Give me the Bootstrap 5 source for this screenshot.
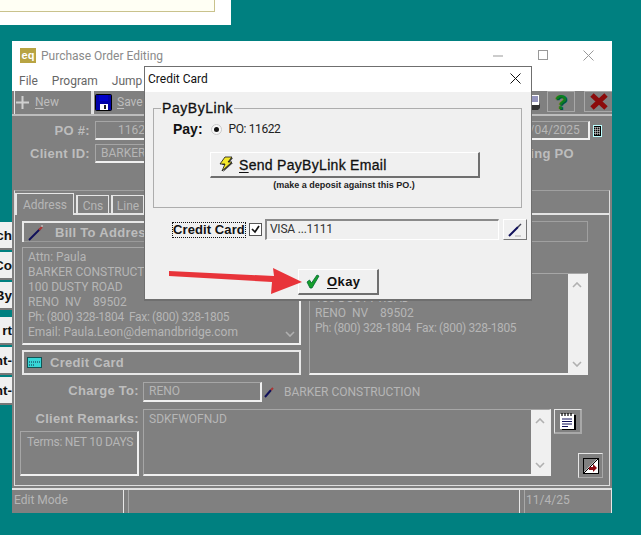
<!DOCTYPE html>
<html lang="en">
<head>
  <meta charset="UTF-8" />
  <meta name="viewport" content="width=device-width, initial-scale=1.0" />
  <title>Purchase Order Editing</title>
  <link href="https://cdn.jsdelivr.net/npm/bootstrap@5.3.3/dist/css/bootstrap.min.css" rel="stylesheet">
  <style>
    html, body { height: 100%; }
    body { margin: 0; background: #008080; overflow: hidden; position: relative; font: 12px/15px Roboto, sans-serif; color: #b6b6b6; }
    svg { display: block; flex: none; }
    u { text-underline-offset: 2px; }

    /* desktop windows */
    .back-win { position: absolute; left: 0; top: 0; width: 231px; height: 25px; background: #fff; }
    .back-inner { width: 215px; height: 12px; background: #fffff4; border: solid #c9c28c; border-width: 0 1px 1px 0; }
    .side-stack { position: absolute; left: 0; top: 222px; width: 12px; font: bold 13.5px/28px "Liberation Sans", sans-serif; color: #111; }
    .side-btn { height: 28px; margin-bottom: 2px; background: #f0f0f0; border-bottom: 2px solid #777; display: flex; justify-content: flex-end; overflow: hidden; white-space: nowrap; }
    .side-gap { margin-bottom: 7px; }

    .main-win { position: absolute; left: 12px; top: 41px; width: 600px; height: 472px; background: #808080; display: flex; flex-direction: column; }
    .win-title { height: 25px; background: #fff; color: #8a8a8a; padding: 7px 0 0 8px; }
    .win-name { padding-top: 1px; }
    .eq-logo { width: 16px; height: 15px; background: #b8a443; color: #fff; font: bold 11px/14px "Liberation Sans", sans-serif; text-align: center; margin-right: 5px; }
    .win-ctrl { margin-left: auto; gap: 34px; padding: 2px 18px 0 0; }
    .win-menu { height: 25px; background: #fff; color: #666; gap: 14px; padding: 8px 0 0 7px; }
    .tool-bar { height: 25px; padding-left: 2px; border-bottom: 2px solid #bdbdbd; }
    .tool-btn { height: 23px; border-left: 1px solid #e6e6e6; border-right: 2px solid #e0e0e0; display: flex; align-items: center; color: #bdbdbd; }
    .tool-new { width: 79px; padding-left: 1px; gap: 6px; }
    .tool-save { width: 120px; border-right: 0; padding-left: 1px; gap: 5px; }
    .tool-print { margin-left: auto; margin-right: 6px; }
    .tool-help { width: 28px; height: 21px; margin-right: 9px; border: 1px solid #a8a8a8; color: #0b7f1e; font: bold 21px/19px "Liberation Sans", sans-serif; text-align: center; text-shadow: 1px 1px 0 #053; }
    .tool-close { width: 28px; height: 21px; border: 1px solid #a8a8a8; border-right: 0; display: flex; align-items: center; justify-content: center; }

    /* form header */
    .form-head { height: 74px; padding-top: 3px; }
    .head-row { height: 23px; display: flex; align-items: center; }
    .form-label-text { font: bold 13px/16px "Liberation Sans", sans-serif; color: #bdbdbd; letter-spacing: .3px; text-align: right; white-space: nowrap; }
    .label-po { width: 78px; margin-right: 5px; }
    .sunk-field { border-style: solid; border-color: #a6a6a6 #f0f0f0 #f0f0f0 #a6a6a6; border-width: 1px 2px 2px 1px; white-space: nowrap; overflow: hidden; padding: 1px 5px 0; }
    .po-field { width: 120px; height: 19px; padding-left: 22px; }
    .client-field { width: 120px; height: 19px; }
    .date-field { width: 80px; height: 19px; margin-left: auto; text-align: right; padding-right: 14px; }
    .date-pick { margin: 0 10px 0 3px; }
    .status-text { margin-left: auto; margin-right: 38px; }

    /* tabbed panel */
    .tab-panel { height: 296px; margin-left: 2px; margin-right: 2px; border: 1px solid #dedede; border-top-color: #a0a0a0; }
    .tab-strip { height: 24px; padding-top: 2px; gap: 2px; border-bottom: 2px solid #e4e4e4; }
    .tab-item { height: 20px; margin-top: 2px; line-height: 20px; text-align: center; border: solid #e6e6e6; border-width: 1px 1px 0 2px; }
    .tab-on { width: 59px; height: 22px; margin-top: 0; line-height: 22px; background: #808080; position: relative; z-index: 1; }
    .tab-cns { width: 33px; }
    .tab-line { width: 33px; }
    .panel-cols { display: grid; grid-template-columns: 279px 279px; column-gap: 8px; padding: 6px 0 0 7px; }
    .head-box { height: 21px; border: solid #e8e8e8; border-width: 2px 0 0 2px; box-shadow: inset -1px -1px 0 #9a9a9a; display: flex; align-items: center; padding-left: 4px; margin-bottom: 5px; }
    .head-bill { gap: 11px; }
    .right-stack { display: flex; flex-direction: column; }
    .right-head { height: 21px; border: 1px solid #a0a0a0; margin-bottom: 31px; }
    .addr-box { display: flex; border-style: solid; border-color: #a6a6a6 #f0f0f0 #f0f0f0 #a6a6a6; border-width: 1px 2px 2px 1px; white-space: nowrap; overflow: hidden; }
    .addr-left { height: 98px; }
    .addr-right { height: 102px; }
    .addr-text { flex: 1; padding: 2px 5px; overflow: hidden; }
    .phone-line { letter-spacing: -.35px; }
    .scroll-bar { width: 18px; background: #f0f0f0; display: flex; flex-direction: column; justify-content: space-between; align-items: center; padding: 8px 0 6px; }
    .scroll-dim { background: #808080; padding-top: 0; justify-content: flex-end; }
    .credit-box { height: 25px; margin-top: 5px; border: 2px solid #e8e8e8; display: flex; align-items: center; padding-left: 3px; gap: 8px; }
    .charge-row { display: flex; align-items: center; height: 20px; margin: 7px 0 0 7px; }
    .label-charge { width: 117px; margin-right: 4px; line-height: 14px; padding-bottom: 2px; }
    .charge-field { width: 119px; height: 20px; }
    .charge-pen { margin: 0 10px 0 2px; }
    .remark-grid { display: grid; grid-template-columns: 119px 408px 50px; column-gap: 4px; margin: 7px 0 0 5px; }
    .remark-left { display: flex; flex-direction: column; }
    .label-remark { height: 22px; line-height: 20px; }
    .terms-box { height: 45px; padding: 3px 6px; letter-spacing: -.25px; }
    .remark-box { height: 67px; }
    .remark-side { display: flex; flex-direction: column; align-items: flex-start; margin-left: -1px; }
    .note-btn { width: 28px; height: 25px; border: solid; border-color: #e6e6e6 #a8a8a8 #a8a8a8 #e6e6e6; border-width: 1px 2px 2px 1px; display: flex; align-items: center; justify-content: center; }
    .nav-btn { width: 25px; height: 25px; margin: 19px 0 0 24px; border: 1px solid; border-color: #e6e6e6 #a8a8a8 #a8a8a8 #e6e6e6; display: flex; align-items: center; justify-content: center; }

    .status-bar { height: 25px; margin-top: 2px; border-top: 2px solid #e0e0e0; display: flex; }
    .stat-one { width: 112px; padding: 3px 2px; border-right: 1px solid #e8e8e8; }
    .stat-two { width: 392px; margin-left: 4px; border-left: 1px solid #a8a8a8; border-right: 1px solid #e8e8e8; }
    .stat-three { flex: 1; margin-left: 4px; padding: 3px 1px; border-left: 1px solid #a8a8a8; border-right: 1px solid #e8e8e8; }

    /* dialog */
    .cc-dialog { position: absolute; left: 144px; top: 66px; width: 388px; height: 235px; background: #f0f0f0; border: solid #6f6f6f; border-width: 1px 1px 2px 1px; color: #111; display: flex; flex-direction: column; }
    .cc-title { height: 25px; background: #fff; padding: 5px 10px 0 3px; color: #111; }
    .cc-close { margin-left: auto; margin-top: 1px; }
    .cc-group { height: 100px; margin: 16px 9px 0 8px; border: 1px solid #adadad; position: relative; }
    .cc-legend { position: absolute; left: 7px; top: -9px; padding: 0 1px; background: #f0f0f0; font: 14px/16px "Liberation Sans", sans-serif; -webkit-text-stroke: .3px #111; letter-spacing: .55px; }
    .pay-row { height: 18px; margin: 11px 0 0 19px; display: flex; align-items: center; }
    .pay-label { font: bold 14px/16px "Liberation Sans", sans-serif; margin-right: 8px; }
    .radio-dot { width: 11px; height: 11px; border-radius: 50%; background: #f7f7f7; border: 1px solid #c9c9c9; margin-right: 7px; display: flex; align-items: center; justify-content: center; }
    .radio-dot::after { content: ""; width: 5px; height: 5px; border-radius: 50%; background: #111; }
    .pay-value { color: #222; letter-spacing: -.4px; }
    .send-btn { width: 270px; height: 26px; margin: 14px 0 0 56px; background: #f0f0f0; border: solid; border-color: #fff #6f6f6f #6f6f6f #fff; border-width: 1px 2px 2px 1px; display: flex; align-items: center; padding-left: 6px; gap: 5px; font: 14px/16px "Liberation Sans", sans-serif; -webkit-text-stroke: .3px #111; letter-spacing: .3px; white-space: nowrap; }
    .send-note { font: bold 9px/11px "Liberation Sans", sans-serif; text-align: center; margin: 2px 0 0 13px; color: #222; }
    .cc-row { display: flex; align-items: center; height: 21px; margin: 11px 0 0 27px; }
    .cc-label { font: bold 13px/14px "Liberation Sans", sans-serif; border: 1px dotted #111; letter-spacing: .1px; margin-right: 3px; white-space: nowrap; }
    .cc-check { width: 13px; height: 13px; background: #fff; border: 1px solid #555; margin-right: 3px; display: flex; align-items: center; justify-content: center; }
    .cc-input { width: 234px; height: 21px; border: solid; border-color: #8a8a8a #fff #fff #8a8a8a; border-width: 2px 1px 1px 2px; padding: 0 3px; color: #333; line-height: 17px; letter-spacing: -.2px; }
    .cc-edit { width: 24px; height: 21px; margin-left: 4px; border: 1px solid; border-color: #fff #777 #777 #fff; display: flex; align-items: center; justify-content: center; }
    .okay-wrap { display: flex; margin: 29px 0 0 153px; }
    .okay-btn { width: 81px; height: 26px; border: solid; border-color: #fff #6f6f6f #6f6f6f #fff; border-width: 1px 2px 2px 1px; display: flex; align-items: center; padding-left: 7px; gap: 7px; font: bold 13px/16px "Liberation Sans", sans-serif; letter-spacing: .4px; }
    .red-arrow { position: absolute; left: 160px; top: 260px; }
  </style>
</head>
<body>

  <!-- windows behind -->
  <div class="back-win"><div class="back-inner"></div></div>
  <div class="side-stack">
    <div class="side-btn">ch</div>
    <div class="side-btn">Co</div>
    <div class="side-btn side-gap">By</div>
    <div class="side-btn">rt</div>
    <div class="side-btn">nt-</div>
    <div class="side-btn">nt-</div>
  </div>

  <!-- Purchase order window -->
  <div class="main-win">
    <div class="win-title d-flex">
      <div class="eq-logo">eq</div>
      <div class="win-name">Purchase Order Editing</div>
      <div class="win-ctrl d-flex">
        <svg width="11" height="11" viewBox="0 0 11 11"><path d="M0 6h10" stroke="#999"/></svg>
        <svg width="11" height="11" viewBox="0 0 11 11"><rect x=".5" y=".5" width="9" height="9" fill="none" stroke="#999"/></svg>
        <svg width="11" height="11" viewBox="0 0 11 11"><path d="M.5.5l10 10M10.5.5l-10 10" stroke="#999"/></svg>
      </div>
    </div>
    <div class="win-menu d-flex">
      <span>File</span><span>Program</span><span>Jump</span>
    </div>
    <div class="tool-bar d-flex">
      <div class="tool-btn tool-new">
        <svg width="13" height="13" viewBox="0 0 13 13"><path d="M6.5 0v13M0 6.500h13" stroke="#cfcfcf" stroke-width="2"/></svg>
        <span><u>N</u>ew</span>
      </div>
      <div class="tool-btn tool-save">
        <svg width="17" height="17" viewBox="0 0 17 17"><rect x=".5" y=".5" width="16" height="16" rx="1" fill="#0000a8" stroke="#000"/><rect x="4" y="1" width="9" height="6" fill="#0000c8"/><rect x="5" y="10" width="8" height="6" fill="#fff"/><rect x="9" y="11" width="2" height="4" fill="#222"/></svg>
        <span><u>S</u>ave</span>
      </div>
      <div class="tool-btn tool-print border-0">
        <svg width="11" height="18" viewBox="0 0 11 18"><path d="M0 1h9v10H0z" fill="#fff"/><path d="M0 3h8M0 5h8M0 7h8" stroke="#2a2a7a"/><path d="M0 11h9l1-2v5l-2 2H0z" fill="#333"/></svg>
      </div>
      <div class="tool-help">?</div>
      <div class="tool-close">
        <svg width="18" height="17" viewBox="0 0 18 17"><path d="M2 2l14 13M16 2L2 15" stroke="#8c0b0b" stroke-width="5"/></svg>
      </div>
    </div>

    <div class="form-head">
      <div class="head-row">
        <div class="form-label-text label-po">PO #:</div>
        <div class="sunk-field po-field">11622</div>
        <div class="sunk-field date-field">11/04/2025</div>
        <svg class="date-pick" width="9" height="12" viewBox="0 0 9 12"><rect width="9" height="12" fill="#bff"/><rect x="1" y="1" width="7" height="10" fill="#000"/><path d="M2 2v8M4 2v8M6 2v8M2 3h5M2 5h5M2 7h5M2 9h5" stroke="#eee" stroke-dasharray="1 1"/></svg>
      </div>
      <div class="head-row">
        <div class="form-label-text label-po">Client ID:</div>
        <div class="sunk-field client-field">BARKER CONST</div>
        <div class="form-label-text status-text">Pending PO</div>
      </div>
    </div>

    <div class="tab-panel">
      <div class="tab-strip d-flex">
        <div class="tab-item tab-on">Address</div>
        <div class="tab-item tab-cns">Cns</div>
        <div class="tab-item tab-line">Line</div>
      </div>
      <div class="panel-cols">
        <div>
          <div class="head-box head-bill">
            <svg width="16" height="16" viewBox="0 0 16 16"><path d="M1 15L12 4" stroke="#10105a" stroke-width="2"/><path d="M11 5l3-3" stroke="#a33" stroke-width="2"/><path d="M13 1l2 0" stroke="#ddd"/></svg>
            <span class="form-label-text">Bill To Address</span>
          </div>
          <div class="addr-box addr-left">
            <div class="addr-text">Attn: Paula<br>BARKER CONSTRUCTION<br>100 DUSTY ROAD<br>RENO&nbsp; NV &nbsp;&nbsp; 89502<br><span class="phone-line">Ph: (800) 328-1804&nbsp; Fax: (800) 328-1805</span><br>Email: Paula.Leon@demandbridge.com</div>
            <div class="scroll-bar scroll-dim">
              <svg width="10" height="6" viewBox="0 0 10 6"><path d="M1 1l4 4 4-4" fill="none" stroke="#b0b0b0" stroke-width="1.6"/></svg>
            </div>
          </div>
          <div class="credit-box">
            <svg width="15" height="11" viewBox="0 0 15 11"><rect width="15" height="11" fill="#37d6d6"/><path d="M2 5h11M2 8h6" stroke="#124" stroke-dasharray="1 1"/><rect x=".5" y=".5" width="14" height="10" fill="none" stroke="#155"/></svg>
            <span class="form-label-text">Credit Card</span>
          </div>
        </div>
        <div class="right-stack">
          <div class="right-head"></div>
          <div class="addr-box addr-right">
            <div class="addr-text">&nbsp;<br>100 DUSTY ROAD<br>RENO&nbsp; NV &nbsp;&nbsp; 89502<br><span class="phone-line">Ph: (800) 328-1804&nbsp; Fax: (800) 328-1805</span></div>
            <div class="scroll-bar">
              <svg width="10" height="6" viewBox="0 0 10 6"><path d="M1 5l4-4 4 4" fill="none" stroke="#b0b0b0" stroke-width="1.6"/></svg>
              <svg width="10" height="6" viewBox="0 0 10 6"><path d="M1 1l4 4 4-4" fill="none" stroke="#b0b0b0" stroke-width="1.6"/></svg>
            </div>
          </div>
        </div>
      </div>
      <div class="charge-row">
        <div class="form-label-text label-charge">Charge To:</div>
        <div class="sunk-field charge-field">RENO</div>
        <svg class="charge-pen" width="10" height="12" viewBox="0 0 10 12"><path d="M1 11l6-7" stroke="#10105a" stroke-width="2"/><path d="M7 4l2-2" stroke="#a33" stroke-width="2"/></svg>
        <div>BARKER CONSTRUCTION</div>
      </div>
      <div class="remark-grid">
        <div class="remark-left">
          <div class="form-label-text label-remark">Client Remarks:</div>
          <div class="sunk-field terms-box">Terms: NET 10 DAYS</div>
        </div>
        <div class="addr-box remark-box">
          <div class="addr-text">SDKFWOFNJD</div>
          <div class="scroll-bar">
            <svg width="10" height="6" viewBox="0 0 10 6"><path d="M1 5l4-4 4 4" fill="none" stroke="#b0b0b0" stroke-width="1.6"/></svg>
            <svg width="10" height="6" viewBox="0 0 10 6"><path d="M1 1l4 4 4-4" fill="none" stroke="#b0b0b0" stroke-width="1.6"/></svg>
          </div>
        </div>
        <div class="remark-side">
          <div class="note-btn">
            <svg width="16" height="17" viewBox="0 0 16 17"><rect x="2" y="2" width="14" height="15" fill="#000"/><rect x="0" y="1" width="14" height="15" fill="#fff"/><path d="M2 0v3M5 0v3M8 0v3M11 0v3" stroke="#000" stroke-width="1.2"/><path d="M2 6h10M2 8.500h10M2 11h10M2 13.500h6" stroke="#10105a"/></svg>
          </div>
          <div class="nav-btn">
            <svg width="16" height="16" viewBox="0 0 16 16"><rect x=".5" y=".5" width="15" height="15" fill="#fff" stroke="#000"/><path d="M1 1h13L1 14z" fill="#808080"/><path d="M1 15L15 1" stroke="#000"/><path d="M6 9h4V6l4 4-4 4v-2H6z" fill="#8c0b14"/></svg>
          </div>
        </div>
      </div>
    </div>

    <div class="status-bar">
      <div class="stat-one">Edit Mode</div>
      <div class="stat-two"></div>
      <div class="stat-three">11/4/25</div>
    </div>
  </div>

  <!-- Credit Card dialog -->
  <div class="cc-dialog">
    <div class="cc-title d-flex">
      <span>Credit Card</span>
      <svg class="cc-close" width="11" height="11" viewBox="0 0 11 11"><path d="M.5.5l10 10M10.500.5l-10 10" stroke="#111"/></svg>
    </div>
    <div class="cc-group">
      <div class="cc-legend">PayByLink</div>
      <div class="pay-row">
        <span class="pay-label">Pay:</span>
        <span class="radio-dot"></span>
        <span class="pay-value">PO: 11622</span>
      </div>
      <div class="send-btn">
        <svg width="17" height="17" viewBox="0 0 17 17"><path d="M9 2h7l-4 5h4L6 16l3-7H5z" fill="#444"/><path d="M8 1h7l-4 5h4L5 15l3-7H3z" fill="#f4e82a" stroke="#111" stroke-width=".8"/></svg>
        <span><u>S</u>end PayByLink Email</span>
      </div>
      <div class="send-note">(make a deposit against this PO.)</div>
    </div>
    <div class="cc-row">
      <span class="cc-label">Credit Card</span>
      <span class="cc-check">
        <svg width="9" height="9" viewBox="0 0 9 9"><path d="M1 4l3 3 4-6" fill="none" stroke="#111" stroke-width="1.7"/></svg>
      </span>
      <div class="cc-input">VISA ...1111</div>
      <div class="cc-edit">
        <svg width="14" height="14" viewBox="0 0 14 14"><path d="M1 13l9-9" stroke="#10105a" stroke-width="2"/><path d="M10 4l3-3" stroke="#445" stroke-width="1.400"/><path d="M7 13h6" stroke="#aaa"/></svg>
      </div>
    </div>
    <div class="okay-wrap">
      <div class="okay-btn">
        <svg width="14" height="15" viewBox="0 0 14 15"><path d="M1 8l2.500-2 2 3L11 1l2 1-7 12H4z" fill="#16a02a" stroke="#063" stroke-width=".8"/></svg>
        <span><u>O</u>kay</span>
      </div>
    </div>
  </div>

  <!-- annotation arrow -->
  <svg class="red-arrow" width="150" height="40" viewBox="0 0 150 40"><path d="M9 11l0 5 103 6-1 12 31-12-29-14 1 8z" fill="#e8343a"/></svg>

  <script src="https://cdn.jsdelivr.net/npm/bootstrap@5.3.3/dist/js/bootstrap.bundle.min.js"></script>
</body>
</html>
